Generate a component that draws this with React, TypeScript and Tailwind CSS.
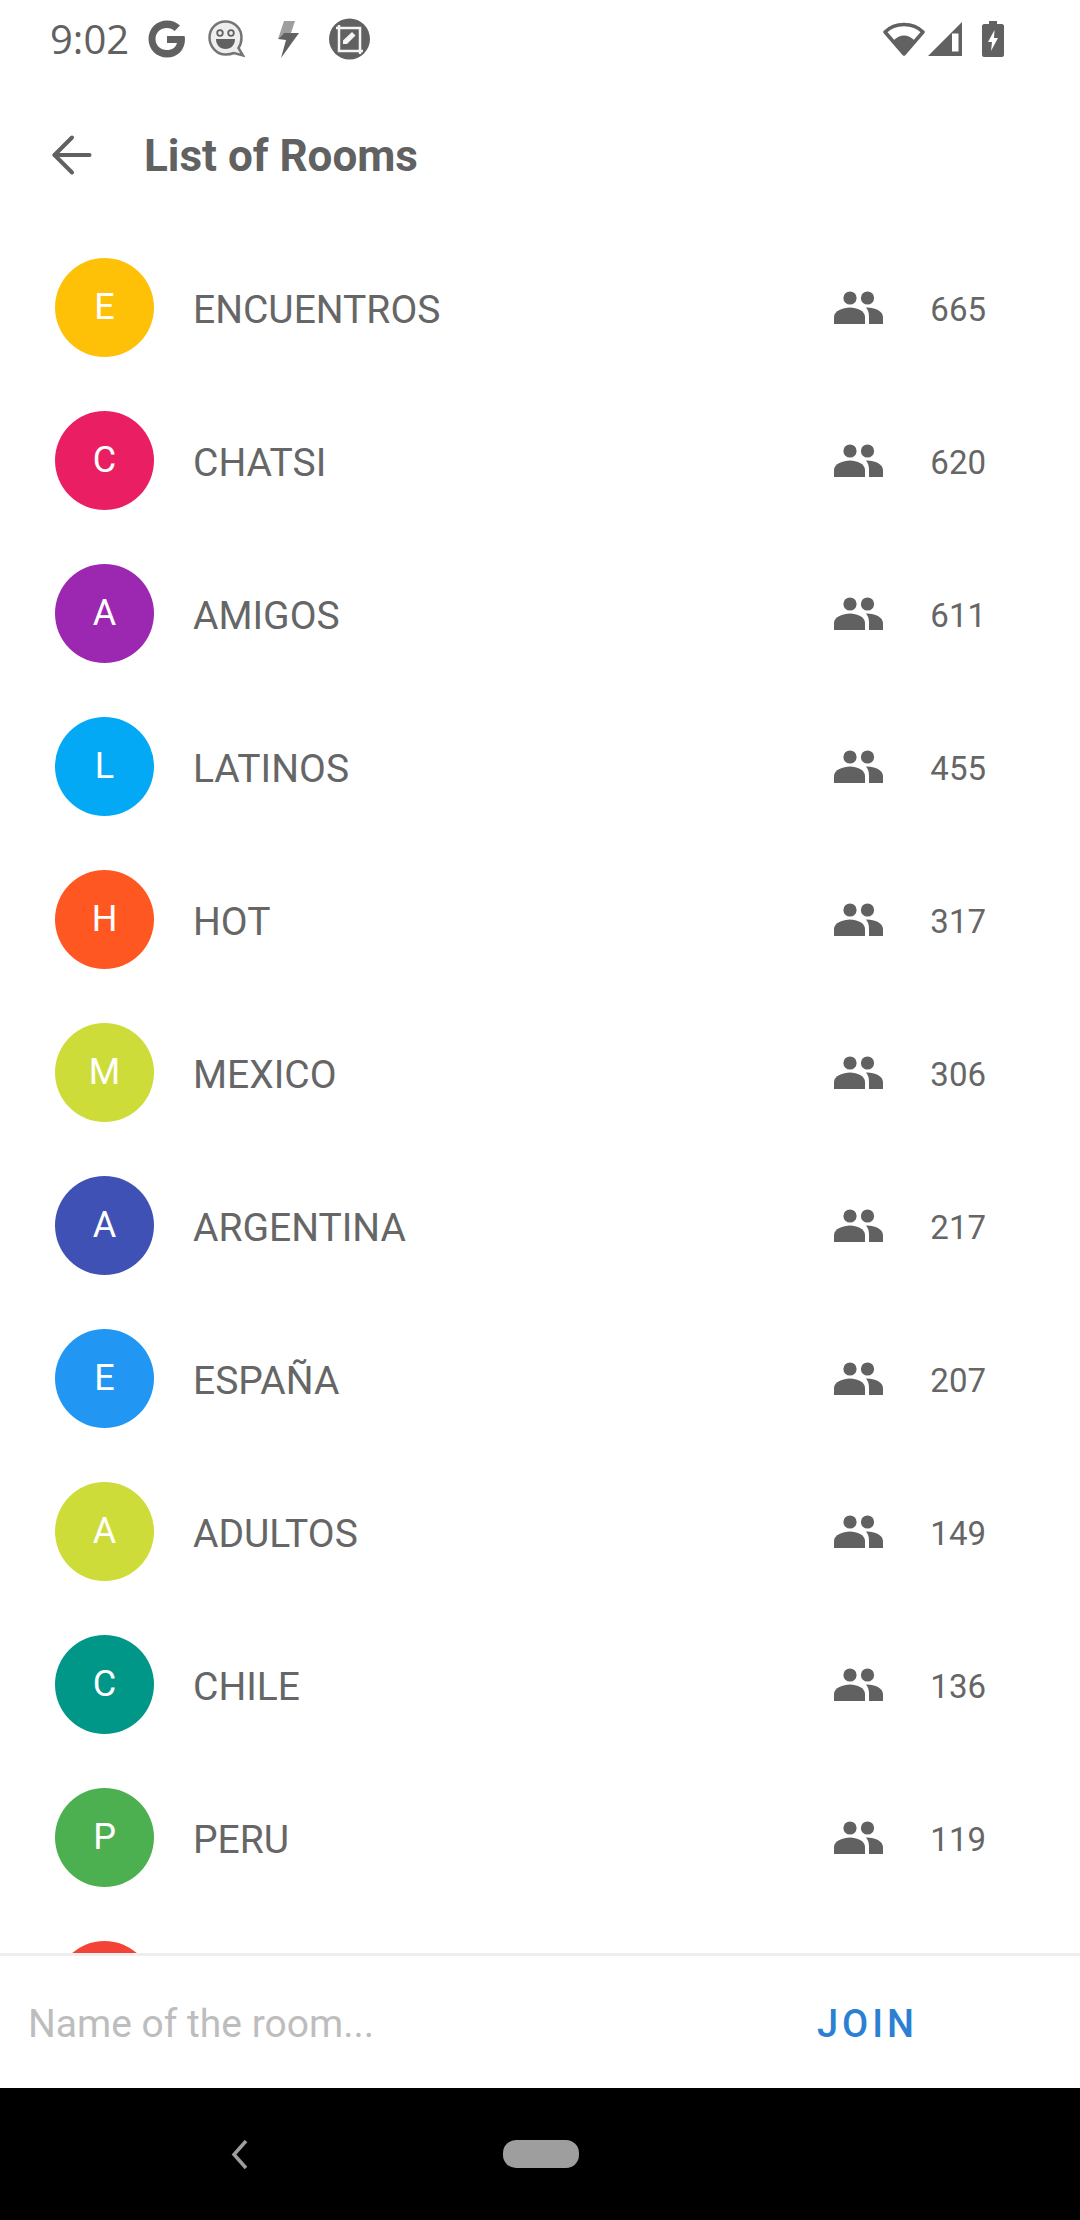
import { ArrowLeft } from "lucide-react";

const rooms = [
  { name: "ENCUENTROS", count: 665, color: "bg-[#ffc107]" },
  { name: "CHATSI", count: 620, color: "bg-[#e91e63]" },
  { name: "AMIGOS", count: 611, color: "bg-[#9c27b0]" },
  { name: "LATINOS", count: 455, color: "bg-[#03a9f4]" },
  { name: "HOT", count: 317, color: "bg-[#ff5722]" },
  { name: "MEXICO", count: 306, color: "bg-[#cddc39]" },
  { name: "ARGENTINA", count: 217, color: "bg-[#3f51b5]" },
  { name: "ESPAÑA", count: 207, color: "bg-[#2196f3]" },
  { name: "ADULTOS", count: 149, color: "bg-[#cddc39]" },
  { name: "CHILE", count: 136, color: "bg-[#009688]" },
  { name: "PERU", count: 119, color: "bg-[#4caf50]" },
];

const PeopleIcon = () => (
  <svg width="50" height="34" viewBox="0 0 50 34" fill="#616161">
    <circle cx="16" cy="7" r="6.6" />
    <circle cx="33.5" cy="7" r="6.6" />
    <path d="M0 33V26C0 20 9 16.5 16 16.5S31 20 31 26V33Z" />
    <path d="M32 16.6C40 16.2 49 20 49 26V33H35V26C35 22 34 19 32 16.6Z" />
  </svg>
);

const StatusBar = () => (
  <div className="flex h-[78px] shrink-0 items-center justify-between pl-[50px] pr-[76px] text-[#616161]">
    <div className="flex items-center">
      <span className="font-['Open_Sans'] text-[40px] leading-none">9:02</span>
      <svg className="ml-[19px]" width="37" height="38" viewBox="0 0 37 38">
        <path d="M36.5 16H19V23H29C27.8 27.5 24 30 19 30 12.5 30 7.5 25.5 7.5 19S12.5 8 19 8C22 8 24.6 9 26.7 10.9L32 5.6C28.6 2.3 24.2 0.5 19 0.5 8.6 0.5 0.5 8.6 0.5 19S8.6 37.5 19 37.5C29.5 37.5 37 30 37 19 37 18 36.8 17 36.5 16Z" fill="#616161" />
      </svg>
      <svg className="ml-[23px]" width="37" height="38" viewBox="0 0 37 38">
        <path d="M17.5 1.5C26.5 1.5 33.5 8.5 33.5 17.5 33.5 21.5 32.6 25 30.5 28L35 35.5 26 33C23.5 34 20.5 34.5 17.5 34.5 8.5 34.5 1.5 26.5 1.5 17.5S8.5 1.5 17.5 1.5Z" fill="#eeeeee" stroke="#757575" strokeWidth="2.5" />
        <circle cx="12" cy="13" r="2.8" fill="none" stroke="#616161" strokeWidth="1.8" />
        <circle cx="23" cy="13" r="2.8" fill="none" stroke="#616161" strokeWidth="1.8" />
        <path d="M8 19H27C27 25 23 29 17.5 29S8 25 8 19Z" fill="#616161" />
      </svg>
      <svg className="ml-[32px]" width="23" height="38" viewBox="0 0 23 38">
        <path d="M7 1H18L14 13 7 13 1 19 7 1Z" fill="#9e9e9e" />
        <path d="M1 19 7 13H22L4 38 9 20Z" fill="#616161" />
      </svg>
      <svg className="ml-[29px]" width="41" height="42" viewBox="0 0 41 42">
        <circle cx="20.5" cy="21" r="20.5" fill="#616161" />
        <path d="M10 7V33H34M7 10H31V36" fill="none" stroke="#f5f5f5" strokeWidth="2.5" />
        <path d="M14 26V22.5L23 14 26.5 17.5 18 26Z" fill="#f5f5f5" />
      </svg>
    </div>
    <div className="flex items-center">
      <svg width="42" height="34" viewBox="0 0 42 34">
        <path d="M21 32 2 10C7 5 13.5 2.5 21 2.5S35 5 40 10Z" fill="none" stroke="#616161" strokeWidth="3.5" strokeLinejoin="round" />
        <path d="M21 33 10 19C13 15.5 17 13.5 21 13.5S29 15.5 32 19Z" fill="#616161" />
      </svg>
      <svg className="ml-[3px]" width="35" height="34" viewBox="0 0 35 34">
        <path d="M34 0V34H0Z" fill="#616161" />
        <path d="M24 11.5H30.5V29.5H24Z" fill="#ffffff" />
      </svg>
      <svg className="ml-[19px]" width="22" height="36" viewBox="0 0 22 36">
        <path d="M7 0H15V3H20C21 3 22 4 22 5V34C22 35 21 36 20 36H2C1 36 0 35 0 34V5C0 4 1 3 2 3H7Z" fill="#616161" />
        <path d="M12.5 9 6 21H10L9 30 16 17H12Z" fill="#ffffff" />
      </svg>
    </div>
  </div>
);

const RoomRow = ({ name, count, color }: { name: string; count: number; color: string }) => (
  <div className="flex h-[153px] shrink-0 items-center pl-[55px] pr-[94px]">
    <div className={`flex h-[99px] w-[99px] shrink-0 items-center justify-center rounded-full pb-[2px] text-[36px] text-white ${color}`}>
      {name[0]}
    </div>
    <span className="ml-[39px] flex-1 pt-[5px] text-[39px] text-[#666666]">{name}</span>
    <PeopleIcon />
    <span className="ml-[46px] pt-[5px] text-[33px] text-[#666666]">{count}</span>
  </div>
);

export default function App() {
  return (
    <div className="flex h-[2220px] w-[1080px] flex-col overflow-hidden bg-white font-['Roboto',sans-serif]">
      <StatusBar />
      <header className="flex h-[153px] shrink-0 items-center pl-[42px] text-[#616161]">
        <ArrowLeft size={60} strokeWidth={1.6} />
        <h1 className="ml-[42px] pt-[2px] text-[44px] font-bold">List of Rooms</h1>
      </header>
      <div className="flex min-h-0 flex-1 flex-col overflow-hidden">
        {rooms.map((room) => (
          <RoomRow key={room.name} {...room} />
        ))}
        <div className="ml-[55px] mt-[27px] h-[99px] w-[99px] shrink-0 rounded-full bg-[#f44336]" />
      </div>
      <footer className="flex h-[135px] shrink-0 items-center justify-between border-t-[3px] border-[#eeeeee] pl-[28px] pr-[162px]">
        <span className="pt-[5px] text-[39px] text-[#bdbdbd]">Name of the room...</span>
        <span className="pt-[4px] text-[38px] font-medium tracking-[4px] text-[#2a80d2]">JOIN</span>
      </footer>
      <nav className="relative flex h-[132px] shrink-0 items-center justify-center bg-black">
        <svg className="absolute left-[229px] top-[52px]" width="20" height="30" viewBox="0 0 20 30">
          <path d="M17 1 5 14.5 17 28" fill="none" stroke="#9e9e9e" strokeWidth="3.5" />
        </svg>
        <div className="ml-[2px] h-[28px] w-[76px] rounded-[13px] bg-[#9e9e9e]" />
      </nav>
    </div>
  );
}
